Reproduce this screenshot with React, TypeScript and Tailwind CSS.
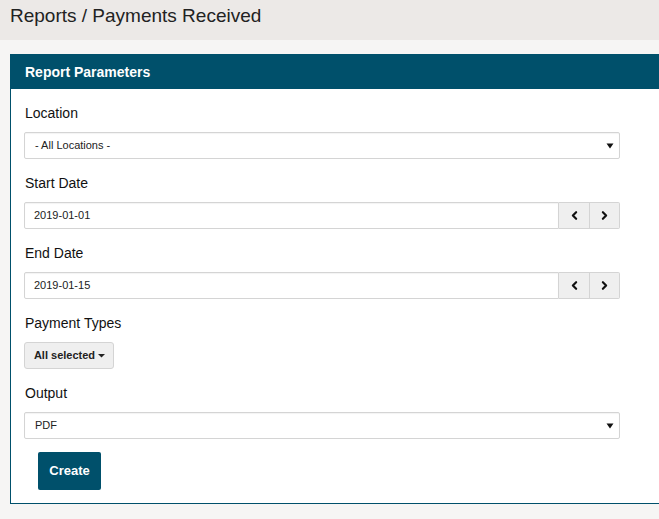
import { ChevronLeft, ChevronRight } from "lucide-react";

const font = { fontFamily: '"Liberation Sans", Arial, sans-serif' };

const Caret = () => (
  <svg width="8" height="6" viewBox="0 0 8 6" className="shrink-0">
    <path d="M0.5 0.5 L7.5 0.5 L4 5.5 Z" fill="#111" />
  </svg>
);

const Label = ({ children }: { children: string }) => (
  <div className="h-5 leading-5 pl-px text-[14px] text-[#111] mb-[9px]">{children}</div>
);

const SelectBox = ({ value }: { value: string }) => (
  <div className="w-[596px] h-[27px] flex items-center justify-between pl-[10px] pr-[5px] bg-white border border-[#d4d4d4] rounded-[2px] shadow-[inset_0_1px_1px_rgba(0,0,0,0.05)] text-[11px] text-[#222]">
    <span>{value}</span>
    <Caret />
  </div>
);

const DateField = ({ value }: { value: string }) => (
  <div className="w-[596px] h-[27px] flex">
    <div className="flex-1 flex items-center pl-[9px] bg-white border border-[#d4d4d4] rounded-l-[2px] shadow-[inset_0_1px_1px_rgba(0,0,0,0.05)] text-[11px] text-[#222]">
      {value}
    </div>
    <button className="w-[31px] flex items-center justify-center bg-[#efefef] border border-l-0 border-[#d4d4d4]">
      <ChevronLeft size={13} strokeWidth={4} color="#111" />
    </button>
    <button className="w-[30px] flex items-center justify-center bg-[#efefef] border border-l-0 border-[#d4d4d4] rounded-r-[2px]">
      <ChevronRight size={13} strokeWidth={4} color="#111" />
    </button>
  </div>
);

export default function App() {
  return (
    <div className="w-[659px] h-[519px] overflow-hidden bg-[#f6f5f4]" style={font}>
      <div className="h-10 bg-[#ece9e7] pl-[10px] flex items-center">
        <h1 className="text-[19px] text-[#222] leading-none -mt-[9px]">Reports / Payments Received</h1>
      </div>

      <div className="mt-[14px] ml-[10px] w-[680px] border border-[#00506b] bg-white">
        <div className="h-[34px] bg-[#00506b] pl-[14px] flex items-center">
          <span className="text-white font-bold text-[14px]">Report Parameters</span>
        </div>

        <div className="pl-[13px] pt-[14px] pb-[13px]">
          <Label>Location</Label>
          <SelectBox value="- All Locations -" />

          <div className="mt-[14px]">
            <Label>Start Date</Label>
            <DateField value="2019-01-01" />
          </div>

          <div className="mt-[14px]">
            <Label>End Date</Label>
            <DateField value="2019-01-15" />
          </div>

          <div className="mt-[14px]">
            <Label>Payment Types</Label>
            <button className="w-[90px] h-[27px] flex items-center justify-center gap-[3px] pl-px bg-[#efefef] border border-[#d4d4d4] rounded-[3px] text-[11px] font-bold text-[#222]">
              All selected
              <svg width="7" height="4" viewBox="0 0 7 4">
                <path d="M0 0 L7 0 L3.5 3.5 Z" fill="#222" />
              </svg>
            </button>
          </div>

          <div className="mt-[14px]">
            <Label>Output</Label>
            <SelectBox value="PDF" />
          </div>

          <button className="mt-[13px] ml-[14px] w-[63px] h-[38px] bg-[#00506b] rounded-[2px] text-white font-bold text-[13px]">
            Create
          </button>
        </div>
      </div>
    </div>
  );
}
